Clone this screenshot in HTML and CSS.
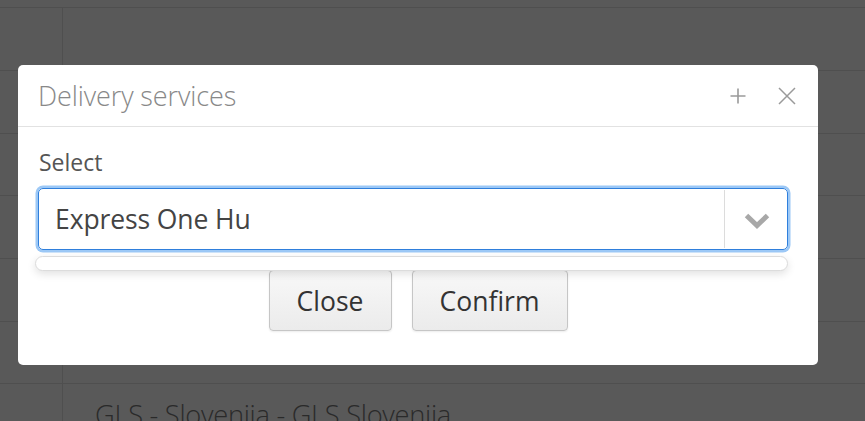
FILE: index.html
```html
<!DOCTYPE html>
<html>
<head>
<meta charset="utf-8">
<link rel="stylesheet" href="styles.css">
</head>
<body>
<div class="page">
  <div class="table">
    <div class="row head"></div>
    <div class="row"><div class="cell-a"></div><div class="cell-b"></div></div>
    <div class="row"><div class="cell-a"></div><div class="cell-b"></div></div>
    <div class="row"><div class="cell-a"></div><div class="cell-b"></div></div>
    <div class="row"><div class="cell-a"></div><div class="cell-b"></div></div>
    <div class="row"><div class="cell-a"></div><div class="cell-b"></div></div>
    <div class="row"><div class="cell-a"></div><div class="cell-b"></div></div>
    <div class="row"><div class="cell-a"></div><div class="cell-b">GLS - Slovenija - GLS Slovenija</div></div>
  </div>
</div>
<div class="overlay"></div>
<div class="modal">
  <div class="modal-header">
    <div class="modal-title">Delivery services</div>
    <div class="header-icons">
      <svg class="icon" width="16" height="16" viewBox="0 0 16 16"><path d="M8 0.5V15.5M0.5 8H15.5" stroke="#9a9a9a" stroke-width="1.6" fill="none"/></svg>
      <svg class="icon" width="18" height="18" viewBox="0 0 18 18"><path d="M1 1L17 17M17 1L1 17" stroke="#9a9a9a" stroke-width="1.5" fill="none"/></svg>
    </div>
  </div>
  <div class="modal-body">
    <label class="label">Select</label>
    <div class="select-wrap">
      <div class="select">
        <div class="select-value">Express One Hu</div>
        <div class="select-arrow">
          <svg width="28" height="18" viewBox="0 0 28 18"><path d="M3.5 3.5L14 13.5L24.5 3.5" stroke="#a8a8a8" stroke-width="5" fill="none" stroke-linejoin="miter"/></svg>
        </div>
      </div>
      <div class="dropdown"></div>
    </div>
  </div>
  <div class="modal-footer">
    <button class="btn btn-close">Close</button>
    <button class="btn btn-confirm">Confirm</button>
  </div>
</div>
</body>
</html>
```
FILE: styles.css
```css
* { box-sizing: border-box; }
html, body { margin: 0; padding: 0; }
body {
  width: 865px;
  height: 421px;
  overflow: hidden;
  font-family: "Open Sans", "Noto Sans", sans-serif;
  background: #ffffff;
  position: relative;
}
.page { width: 865px; height: 421px; overflow: hidden; }
.table { display: flex; flex-direction: column; }
.row {
  display: flex;
  height: 62.67px;
  border-top: 1px solid #e3e3e3;
  flex-shrink: 0;
}
.row.head {
  height: 8px;
  border-top: none;
  border-bottom: 1px solid #e3e3e3;
}
.row.head + .row { border-top: none; height: 62px; }
.cell-a { width: 63px; border-right: 1px solid #e3e3e3; flex-shrink: 0; }
.cell-b {
  flex: 1;
  padding: 12px 0 0 32px;
  font-size: 27.3px;
  font-weight: 300;
  color: #7a7a7a;
  letter-spacing: -0.3px;
  white-space: nowrap;
}
.overlay {
  position: absolute;
  inset: 0;
  background: rgba(0, 0, 0, 0.65);
}
.modal {
  position: absolute;
  left: 18px;
  top: 65px;
  width: 800px;
  height: 300px;
  background: #fff;
  border-radius: 5px;
  display: flex;
  flex-direction: column;
}
.modal-header {
  height: 62px;
  border-bottom: 1px solid #e2e2e2;
  display: flex;
  align-items: center;
  justify-content: space-between;
  padding: 0 22px 0 20px;
}
.modal-title {
  font-size: 27px;
  font-weight: 300;
  color: #888;
  letter-spacing: -0.1px;
}
.header-icons { display: flex; align-items: center; gap: 32px; }
.icon { display: block; }
.modal-body {
  padding: 20px 30px 0 19px;
}
.label {
  display: block;
  font-size: 23px;
  color: #555;
  line-height: 30px;
  margin-left: 2px;
}
.select-wrap { position: relative; margin-top: 11px; }
.select {
  height: 62px;
  border: 1.5px solid #2f7fdc;
  border-radius: 5px;
  box-shadow: 0 0 0 2.5px #9cc8f6;
  display: flex;
  align-items: stretch;
  margin-left: 1px;
}
.select-value {
  flex: 1;
  display: flex;
  align-items: center;
  padding-left: 16px;
  font-size: 26.5px;
  color: #444;
  letter-spacing: -0.1px;
}
.select-arrow {
  width: 63px;
  border-left: 1px solid #dcdcdc;
  margin: 1px 0;
  display: flex;
  align-items: center;
  justify-content: center;
  padding: 3px 0 0 1px;
}
.dropdown {
  position: absolute;
  left: -2px;
  right: 0;
  top: 68px;
  height: 15px;
  background: #fff;
  border: 1px solid #dcdcdc;
  border-radius: 8px;
  box-shadow: 0 3px 8px rgba(0,0,0,0.12);
  z-index: 2;
}
.modal-footer {
  display: flex;
  justify-content: center;
  gap: 20px;
  margin-top: 20px;
}
.btn {
  font-family: "Open Sans", "Noto Sans", sans-serif;
  font-size: 26.5px;
  color: #333;
  height: 61px;
  border: 1px solid #c6c6c6;
  border-radius: 4px;
  background: linear-gradient(#f8f8f8, #ebebeb);
  box-shadow: 0 1px 2px rgba(0,0,0,0.08);
  padding: 0;
}
.btn-close { width: 123px; }
.btn-confirm { width: 156px; }
```
